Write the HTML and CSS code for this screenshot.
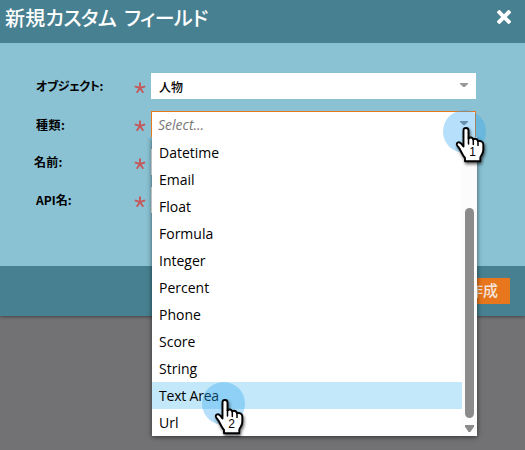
FILE: index.html
```html
<!DOCTYPE html>
<html lang="ja">
<head>
<meta charset="utf-8">
<title>新規カスタム フィールド</title>
<link rel="stylesheet" href="styles.css">
</head>
<body>
<svg width="0" height="0" class="defs" aria-hidden="true">
  <symbol id="star" viewBox="0 0 12 12"><path d="M6 6V.5M6 6L.8 4.4M6 6l5.2-1.6M6 6l-3.3 4.7M6 6l3.3 4.7" fill="none" stroke="#c4585b" stroke-width="1.9"/></symbol>
  <symbol id="hand" viewBox="0 0 30 37">
    <path d="M8.500 20V4.500C8.500 1.200 13.500 1.200 13.500 4.500V12.500C15 10.800 17.800 11.300 18.200 13.500C20 12.100 22.500 13 23 15.200C25.500 14.400 28.300 15.700 28.300 18.500V24C28.300 27.500 26.300 29 25.300 31.500V35.200H10V32C7.800 29.500 6.800 27 5.500 24.500C4.500 22 2.800 21 2 19C1.200 16.500 3.800 15.500 5.500 17C6.700 18 7.500 19.300 8.500 20.500Z" fill="#fff" stroke="#000" stroke-width="1.9" stroke-linejoin="round"/>
    <path d="M13.500 12v6M18.300 13.500v5M23 15.500v4" fill="none" stroke="#000" stroke-width="1.500" stroke-linecap="round"/>
  </symbol>
</svg>
<div class="dialog">
  <header class="head">
    <h1 class="title">新規<span class="kana">カスタム フィールド</span></h1>
    <svg class="close" viewBox="0 0 14 14"><path d="M2.300 2.300l9.400 9.400M11.700 2.300l-9.400 9.400" stroke="#fff" stroke-width="4" stroke-linecap="square"/></svg>
  </header>
  <main class="form">
    <div class="row"><label class="label object">オブジェクト:</label><svg class="star"><use href="#star"/></svg><div class="field"><span>人物</span><i class="caret"></i></div></div>
    <div class="row"><label class="label type">種類:</label><svg class="star"><use href="#star"/></svg>
      <div class="field open"><span class="placeholder">Select...</span><i class="caret"></i>
        <div class="menu">
          <ul class="options">
            <li>Datetime</li><li>Email</li><li>Float</li><li>Formula</li><li>Integer</li><li>Percent</li><li>Phone</li><li>Score</li><li>String</li><li class="active">Text Area</li><li>Url</li>
          </ul>
          <div class="track"><div class="thumb"></div><i class="down"></i></div>
        </div>
      </div>
    </div>
    <div class="row"><label class="label name">名前:</label><svg class="star"><use href="#star"/></svg><div class="field"></div></div>
    <div class="row"><label class="label api">API名:</label><svg class="star"><use href="#star"/></svg><div class="field"></div></div>
  </main>
  <footer class="foot"><button class="create">作成</button></footer>
</div>
<div class="step first"><svg class="hand"><use href="#hand"/></svg><span class="num">1</span></div>
<div class="step second"><svg class="hand"><use href="#hand"/></svg><span class="num">2</span></div>
</body>
</html>
```
FILE: styles.css
```css
* { box-sizing: border-box; }
body {
  margin: 0;
  width: 525px;
  height: 450px;
  overflow: hidden;
  position: relative;
  background: #727275;
  font-family: "Open Sans", "Noto Sans CJK JP", sans-serif;
  color: #000;
}
.defs { position: absolute; }
.dialog { box-shadow: 0 1px 3px rgba(0, 0, 0, .4); }
.head {
  height: 43px;
  background: #478091;
  display: flex;
  justify-content: space-between;
  padding: 0 14px 0 5px;
}
.title {
  margin: 0;
  font: 500 20px/35px "Noto Sans CJK JP", sans-serif;
  font-feature-settings: "palt";
  letter-spacing: .2px;
  color: #fff;
  white-space: nowrap;
}
.kana { letter-spacing: -.5px; word-spacing: 4px; }
.close { width: 14px; height: 14px; margin-top: 10px; border-radius: 2px; }
.form {
  height: 223px;
  padding: 30px 49px 0 36px;
  background: #8ac2d3;
  display: flex;
  flex-direction: column;
  gap: 12px;
}
.row { display: flex; height: 26px; }
.label {
  width: 98px;
  font: 700 12px/25px "Noto Sans CJK JP", sans-serif;
  font-feature-settings: "palt";
  white-space: nowrap;
}
.object { letter-spacing: -.35px; }
.type { letter-spacing: .5px; line-height: 27px; }
.name { margin-left: -2px; width: 100px; letter-spacing: .3px; }
.star { width: 12px; height: 12px; margin: 9px 5px 0 0; }
.field {
  position: relative;
  width: 325px;
  height: 26px;
  padding: 0 8px;
  background: #fff;
  display: flex;
  justify-content: space-between;
  font: 500 12px/27px "Noto Sans CJK JP", sans-serif;
}
.caret {
  width: 8px;
  height: 4px;
  margin-top: 10px;
  background: #999;
  clip-path: polygon(0 0, 100% 0, 100% 25%, 60% 100%, 40% 100%, 0 25%);
}
.open { border: 1px solid #e8761c; border-bottom: 0; padding: 0 7px 0 6px; }
.open .caret { margin-top: 9px; background: #888; }
.placeholder { font: italic 14px/26px "Open Sans", sans-serif; color: #777; }
.menu {
  position: absolute;
  z-index: 2;
  left: 0;
  top: 25px;
  width: 325px;
  height: 299px;
  padding-top: 2px;
  display: flex;
  background: #fff;
  box-shadow: 0 1px 5px rgba(0, 0, 0, .6);
  clip-path: inset(0 -8px -8px -8px);
}
.options {
  list-style: none;
  width: 310px;
  margin: 0;
  padding: 0;
  font: 14px/27px "Open Sans", sans-serif;
}
.options li { height: 27px; padding-left: 7px; }
.options .active { background: #c3e8f9; letter-spacing: -.2px; }
.track {
  width: 15px;
  background: #fcfcfc;
  display: flex;
  flex-direction: column;
  align-items: center;
  padding-top: 69px;
}
.thumb { width: 9px; height: 210px; border-radius: 5px; background: #8b8b8b; }
.down {
  width: 9px;
  height: 7px;
  margin-top: 7px;
  background: #8b8b8b;
  clip-path: polygon(0 0, 100% 0, 100% 25%, 60% 100%, 40% 100%, 0 25%);
}
.foot {
  height: 50px;
  background: #478091;
  display: flex;
  justify-content: flex-end;
  padding: 12px 15px;
}
.create {
  width: 64px;
  height: 26px;
  border: 0;
  padding: 0 12px 3px;
  background: #e8761c;
  color: #f5e4de;
  font: 500 15px/23px "Noto Sans CJK JP", sans-serif;
  text-align: right;
}
.step {
  position: absolute;
  z-index: 5;
  width: 43px;
  height: 43px;
  border-radius: 50%;
  background: rgba(43, 164, 241, .35);
}
.first { left: 443px; top: 110px; }
.second { left: 202px; top: 382px; }
.hand {
  position: absolute;
  left: 12px;
  top: 16px;
  width: 30px;
  height: 37px;
  overflow: visible;
  filter: drop-shadow(1px 2px 1.5px rgba(0, 0, 0, .6));
}
.num {
  position: absolute;
  left: 25px;
  top: 34px;
  width: 9px;
  font: 12px/16px "Liberation Sans", sans-serif;
  text-align: center;
}
```
